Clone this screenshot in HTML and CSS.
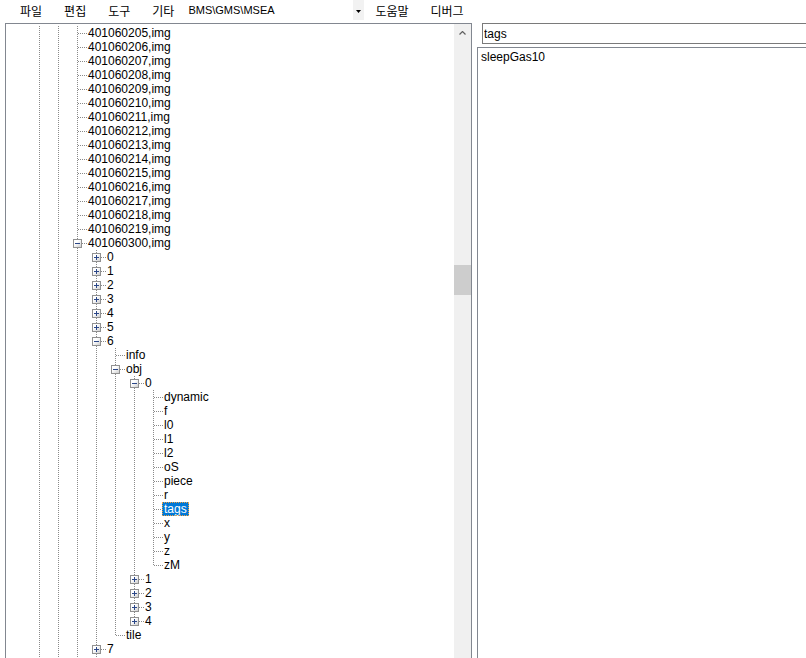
FILE: index.html
```html
<!DOCTYPE html>
<html lang="ko">
<head>
    <meta charset="UTF-8">
    <title>WZ 편집기</title>
    <link rel="stylesheet" href="styles.css">
</head>
<body>
    <div class="menubar">
        <span class="menu-item">파일</span>
        <span class="menu-item">편집</span>
        <span class="menu-item">도구</span>
        <span class="menu-item">기타</span>
        <div class="combo">
            <span class="combo-text">BMS\GMS\MSEA</span>
            <span class="combo-arrow"><svg width="5" height="3" viewBox="0 0 5 3"><polygon points="0,0 5,0 2.5,3" fill="#000"/></svg></span>
        </div>
        <span class="menu-item">도움말</span>
        <span class="menu-item">디버그</span>
    </div>

    <div class="main">
        <div class="tree-panel">
            <div class="tree">
                <div class="row"><span class="c"></span><span class="c v"></span><span class="c v"></span><span class="c t"></span><span class="lbl">401060205,img</span></div>
                <div class="row"><span class="c"></span><span class="c v"></span><span class="c v"></span><span class="c t"></span><span class="lbl">401060206,img</span></div>
                <div class="row"><span class="c"></span><span class="c v"></span><span class="c v"></span><span class="c t"></span><span class="lbl">401060207,img</span></div>
                <div class="row"><span class="c"></span><span class="c v"></span><span class="c v"></span><span class="c t"></span><span class="lbl">401060208,img</span></div>
                <div class="row"><span class="c"></span><span class="c v"></span><span class="c v"></span><span class="c t"></span><span class="lbl">401060209,img</span></div>
                <div class="row"><span class="c"></span><span class="c v"></span><span class="c v"></span><span class="c t"></span><span class="lbl">401060210,img</span></div>
                <div class="row"><span class="c"></span><span class="c v"></span><span class="c v"></span><span class="c t"></span><span class="lbl">401060211,img</span></div>
                <div class="row"><span class="c"></span><span class="c v"></span><span class="c v"></span><span class="c t"></span><span class="lbl">401060212,img</span></div>
                <div class="row"><span class="c"></span><span class="c v"></span><span class="c v"></span><span class="c t"></span><span class="lbl">401060213,img</span></div>
                <div class="row"><span class="c"></span><span class="c v"></span><span class="c v"></span><span class="c t"></span><span class="lbl">401060214,img</span></div>
                <div class="row"><span class="c"></span><span class="c v"></span><span class="c v"></span><span class="c t"></span><span class="lbl">401060215,img</span></div>
                <div class="row"><span class="c"></span><span class="c v"></span><span class="c v"></span><span class="c t"></span><span class="lbl">401060216,img</span></div>
                <div class="row"><span class="c"></span><span class="c v"></span><span class="c v"></span><span class="c t"></span><span class="lbl">401060217,img</span></div>
                <div class="row"><span class="c"></span><span class="c v"></span><span class="c v"></span><span class="c t"></span><span class="lbl">401060218,img</span></div>
                <div class="row"><span class="c"></span><span class="c v"></span><span class="c v"></span><span class="c t"></span><span class="lbl">401060219,img</span></div>
                <div class="row"><span class="c"></span><span class="c v"></span><span class="c v"></span><span class="c t"><b class="box minus"></b></span><span class="lbl">401060300,img</span></div>
                <div class="row"><span class="c"></span><span class="c v"></span><span class="c v"></span><span class="c v"></span><span class="c t"><b class="box plus"></b></span><span class="lbl">0</span></div>
                <div class="row"><span class="c"></span><span class="c v"></span><span class="c v"></span><span class="c v"></span><span class="c t"><b class="box plus"></b></span><span class="lbl">1</span></div>
                <div class="row"><span class="c"></span><span class="c v"></span><span class="c v"></span><span class="c v"></span><span class="c t"><b class="box plus"></b></span><span class="lbl">2</span></div>
                <div class="row"><span class="c"></span><span class="c v"></span><span class="c v"></span><span class="c v"></span><span class="c t"><b class="box plus"></b></span><span class="lbl">3</span></div>
                <div class="row"><span class="c"></span><span class="c v"></span><span class="c v"></span><span class="c v"></span><span class="c t"><b class="box plus"></b></span><span class="lbl">4</span></div>
                <div class="row"><span class="c"></span><span class="c v"></span><span class="c v"></span><span class="c v"></span><span class="c t"><b class="box plus"></b></span><span class="lbl">5</span></div>
                <div class="row"><span class="c"></span><span class="c v"></span><span class="c v"></span><span class="c v"></span><span class="c t"><b class="box minus"></b></span><span class="lbl">6</span></div>
                <div class="row"><span class="c"></span><span class="c v"></span><span class="c v"></span><span class="c v"></span><span class="c v"></span><span class="c t"></span><span class="lbl">info</span></div>
                <div class="row"><span class="c"></span><span class="c v"></span><span class="c v"></span><span class="c v"></span><span class="c v"></span><span class="c t"><b class="box minus"></b></span><span class="lbl">obj</span></div>
                <div class="row"><span class="c"></span><span class="c v"></span><span class="c v"></span><span class="c v"></span><span class="c v"></span><span class="c v"></span><span class="c t"><b class="box minus"></b></span><span class="lbl">0</span></div>
                <div class="row"><span class="c"></span><span class="c v"></span><span class="c v"></span><span class="c v"></span><span class="c v"></span><span class="c v"></span><span class="c v"></span><span class="c t"></span><span class="lbl">dynamic</span></div>
                <div class="row"><span class="c"></span><span class="c v"></span><span class="c v"></span><span class="c v"></span><span class="c v"></span><span class="c v"></span><span class="c v"></span><span class="c t"></span><span class="lbl">f</span></div>
                <div class="row"><span class="c"></span><span class="c v"></span><span class="c v"></span><span class="c v"></span><span class="c v"></span><span class="c v"></span><span class="c v"></span><span class="c t"></span><span class="lbl">l0</span></div>
                <div class="row"><span class="c"></span><span class="c v"></span><span class="c v"></span><span class="c v"></span><span class="c v"></span><span class="c v"></span><span class="c v"></span><span class="c t"></span><span class="lbl">l1</span></div>
                <div class="row"><span class="c"></span><span class="c v"></span><span class="c v"></span><span class="c v"></span><span class="c v"></span><span class="c v"></span><span class="c v"></span><span class="c t"></span><span class="lbl">l2</span></div>
                <div class="row"><span class="c"></span><span class="c v"></span><span class="c v"></span><span class="c v"></span><span class="c v"></span><span class="c v"></span><span class="c v"></span><span class="c t"></span><span class="lbl">oS</span></div>
                <div class="row"><span class="c"></span><span class="c v"></span><span class="c v"></span><span class="c v"></span><span class="c v"></span><span class="c v"></span><span class="c v"></span><span class="c t"></span><span class="lbl">piece</span></div>
                <div class="row"><span class="c"></span><span class="c v"></span><span class="c v"></span><span class="c v"></span><span class="c v"></span><span class="c v"></span><span class="c v"></span><span class="c t"></span><span class="lbl">r</span></div>
                <div class="row"><span class="c"></span><span class="c v"></span><span class="c v"></span><span class="c v"></span><span class="c v"></span><span class="c v"></span><span class="c v"></span><span class="c t"></span><span class="lbl sel">tags</span></div>
                <div class="row"><span class="c"></span><span class="c v"></span><span class="c v"></span><span class="c v"></span><span class="c v"></span><span class="c v"></span><span class="c v"></span><span class="c t"></span><span class="lbl">x</span></div>
                <div class="row"><span class="c"></span><span class="c v"></span><span class="c v"></span><span class="c v"></span><span class="c v"></span><span class="c v"></span><span class="c v"></span><span class="c t"></span><span class="lbl">y</span></div>
                <div class="row"><span class="c"></span><span class="c v"></span><span class="c v"></span><span class="c v"></span><span class="c v"></span><span class="c v"></span><span class="c v"></span><span class="c t"></span><span class="lbl">z</span></div>
                <div class="row"><span class="c"></span><span class="c v"></span><span class="c v"></span><span class="c v"></span><span class="c v"></span><span class="c v"></span><span class="c v"></span><span class="c l"></span><span class="lbl">zM</span></div>
                <div class="row"><span class="c"></span><span class="c v"></span><span class="c v"></span><span class="c v"></span><span class="c v"></span><span class="c v"></span><span class="c t"><b class="box plus"></b></span><span class="lbl">1</span></div>
                <div class="row"><span class="c"></span><span class="c v"></span><span class="c v"></span><span class="c v"></span><span class="c v"></span><span class="c v"></span><span class="c t"><b class="box plus"></b></span><span class="lbl">2</span></div>
                <div class="row"><span class="c"></span><span class="c v"></span><span class="c v"></span><span class="c v"></span><span class="c v"></span><span class="c v"></span><span class="c t"><b class="box plus"></b></span><span class="lbl">3</span></div>
                <div class="row"><span class="c"></span><span class="c v"></span><span class="c v"></span><span class="c v"></span><span class="c v"></span><span class="c v"></span><span class="c l"><b class="box plus"></b></span><span class="lbl">4</span></div>
                <div class="row"><span class="c"></span><span class="c v"></span><span class="c v"></span><span class="c v"></span><span class="c v"></span><span class="c l"></span><span class="lbl">tile</span></div>
                <div class="row"><span class="c"></span><span class="c v"></span><span class="c v"></span><span class="c v"></span><span class="c t"><b class="box plus"></b></span><span class="lbl">7</span></div>
                <div class="row"><span class="c"></span><span class="c v"></span><span class="c v"></span><span class="c v"></span><span class="c l"></span><span class="lbl">info</span></div>
            </div>
            <div class="vscroll">
                <div class="scroll-btn"><svg width="7" height="4" viewBox="0 0 7 4"><polyline points="0.5,3.5 3.5,0.5 6.5,3.5" fill="none" stroke="#606060" stroke-width="1.2"/></svg></div>
                <div class="scroll-thumb"></div>
            </div>
        </div>

        <div class="props">
            <input class="name-box" type="text" value="tags">
            <textarea class="value-box">sleepGas10</textarea>
        </div>
    </div>
</body>
</html>
```

FILE: styles.css
```css
html, body {
    margin: 0;
    padding: 0;
    overflow: hidden;
    background: #fff;
}
body {
    font-family: "Liberation Sans", "Noto Sans CJK KR", sans-serif;
    font-size: 12px;
    color: #000;
}

/* 메뉴 */
.menubar {
    height: 23px;
    display: flex;
    align-items: flex-start;
    padding-left: 9px;
    font-family: "Noto Sans CJK KR", sans-serif;
    font-size: 12px;
}
.menu-item {
    padding: 3px 11px 0;
    line-height: 15px;
    white-space: nowrap;
}
.combo {
    width: 179px;
    height: 20px;
    display: flex;
}
.combo-text {
    padding: 4px 0 0 3px;
    font-family: "Liberation Sans", sans-serif;
    font-size: 11px;
    line-height: 13px;
}
.combo-arrow {
    margin-left: auto;
    width: 11px;
    background: #f2f2f2;
    display: flex;
    justify-content: center;
    padding-top: 10px;
    box-sizing: border-box;
}
.combo-arrow svg {
    display: block;
}

/* 본문 */
.main {
    display: flex;
    gap: 5px;
    padding-left: 5px;
}
.tree-panel {
    width: 467px;
    height: 650px;
    box-sizing: border-box;
    border: 1px solid #828790;
    display: flex;
    flex: none;
}
.tree {
    flex: 1;
    overflow: hidden;
    padding: 2px 0 0 5px;
}

/* 트리 행 */
.row {
    display: flex;
    height: 14px;
}
.c {
    --dot-v: repeating-linear-gradient(to bottom, #8a8a8a 0 1px, transparent 1px 2px);
    --dot-h: repeating-linear-gradient(to right, #8a8a8a 0 1px, transparent 1px 2px);
    width: 19px;
    height: 14px;
    flex: none;
}
.v {
    background: var(--dot-v) 9px 0 / 1px 14px no-repeat;
}
.t {
    background: var(--dot-h) 10px 7px / 9px 1px no-repeat,
                var(--dot-v) 9px 0 / 1px 14px no-repeat;
}
.l {
    background: var(--dot-h) 10px 7px / 9px 1px no-repeat,
                var(--dot-v) 9px 0 / 1px 8px no-repeat;
}
.box {
    display: block;
    width: 9px;
    height: 9px;
    margin: 3px 0 0 5px;
    box-sizing: border-box;
    border: 1px solid #919191;
}
.plus {
    background: linear-gradient(#2b4788, #2b4788) 1px 3px / 5px 1px no-repeat,
                linear-gradient(#2b4788, #2b4788) 3px 1px / 1px 5px no-repeat,
                linear-gradient(135deg, #fff 35%, #cfcfcf);
}
.minus {
    background: linear-gradient(#2b4788, #2b4788) 1px 3px / 5px 1px no-repeat,
                linear-gradient(135deg, #fff 35%, #cfcfcf);
}
.lbl {
    margin-left: -1px;
    padding: 0 2px;
    line-height: 14px;
    white-space: nowrap;
}
.lbl.sel {
    background: #0078d7;
    color: #fff;
    outline: 1px dotted #f3a140;
    outline-offset: -1px;
}

/* 스크롤바 */
.vscroll {
    width: 17px;
    flex: none;
    background: #f0f0f0;
}
.scroll-btn {
    height: 17px;
    display: flex;
    align-items: center;
    justify-content: center;
}
.scroll-btn svg {
    display: block;
}
.scroll-thumb {
    margin-top: 224px;
    height: 30px;
    background: #cdcdcd;
}

/* 속성 */
.props {
    flex: 1;
    min-width: 0;
    margin-right: -20px;
    display: flex;
    flex-direction: column;
}
.name-box {
    margin: 0 0 0 5px;
    height: 21px;
    box-sizing: border-box;
    border: 1px solid #7a7a7a;
    padding: 0 1px;
    font-family: "Liberation Sans", sans-serif;
    font-size: 12px;
    color: #000;
    outline: none;
}
.value-box {
    margin: 3px 0 0 0;
    height: 620px;
    box-sizing: border-box;
    border: 1px solid #828790;
    padding: 2px 3px;
    font-family: "Liberation Sans", sans-serif;
    font-size: 12px;
    line-height: 14px;
    color: #000;
    resize: none;
    outline: none;
}
```
